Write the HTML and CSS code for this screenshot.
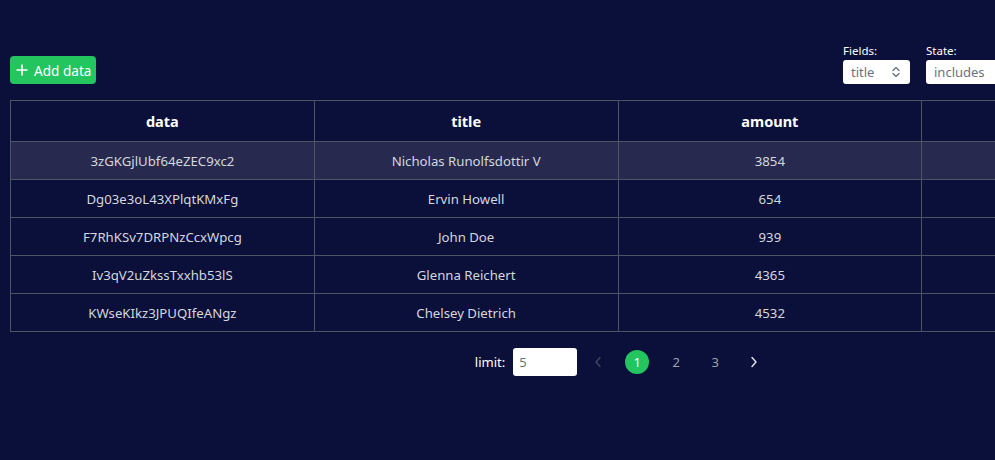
FILE: index.html
```
<!DOCTYPE html>
<html lang="en">
<head>
<meta charset="utf-8">
<title>Data table</title>
<link rel="stylesheet" href="styles.css">
</head>
<body>
<div class="page">
  <div class="toolbar">
    <button class="add-btn" type="button">
      <svg class="plus" viewBox="0 0 12 12" width="12" height="12"><path d="M6 0.5v11M0.5 6h11" stroke="#fff" stroke-width="1.6" fill="none"/></svg>
      <span>Add data</span>
    </button>
    <div class="filters">
      <div class="field">
        <span class="field-label">Fields:</span>
        <span class="select">
          <span class="select-value">title</span>
          <svg class="updown" viewBox="0 0 10 14" width="10" height="14"><path d="M2 5.5L5 2.5L8 5.5M2 8.5L5 11.5L8 8.5" stroke="#6b7280" stroke-width="1.4" fill="none" stroke-linecap="round" stroke-linejoin="round"/></svg>
        </span>
      </div>
      <div class="field">
        <span class="field-label">State:</span>
        <span class="text-input wide">includes</span>
      </div>
    </div>
  </div>

  <table class="grid">
    <thead>
      <tr><th>data</th><th>title</th><th>amount</th><th></th></tr>
    </thead>
    <tbody>
      <tr class="hover"><td>3zGKGjlUbf64eZEC9xc2</td><td>Nicholas Runolfsdottir V</td><td>3854</td><td></td></tr>
      <tr><td>Dg03e3oL43XPlqtKMxFg</td><td>Ervin Howell</td><td>654</td><td></td></tr>
      <tr><td>F7RhKSv7DRPNzCcxWpcg</td><td>John Doe</td><td>939</td><td></td></tr>
      <tr><td>Iv3qV2uZkssTxxhb53lS</td><td>Glenna Reichert</td><td>4365</td><td></td></tr>
      <tr><td>KWseKIkz3JPUQIfeANgz</td><td>Chelsey Dietrich</td><td>4532</td><td></td></tr>
    </tbody>
  </table>

  <div class="pager">
    <span class="limit-label">limit:</span>
    <span class="limit-input">5</span>
    <div class="pages">
      <span class="arrow disabled"><svg viewBox="0 0 8 12" width="8" height="12"><path d="M6 1.5L2 6l4 4.5" stroke="currentColor" stroke-width="1.4" fill="none" stroke-linecap="round" stroke-linejoin="round"/></svg></span>
      <span class="page-num active">1</span>
      <span class="page-num">2</span>
      <span class="page-num">3</span>
      <span class="arrow"><svg viewBox="0 0 8 12" width="8" height="12"><path d="M2 1.5L6 6l-4 4.5" stroke="currentColor" stroke-width="1.4" fill="none" stroke-linecap="round" stroke-linejoin="round"/></svg></span>
    </div>
  </div>
</div>
</body>
</html>
```
FILE: styles.css
```
html {
  background: #0b103a;
}
body {
  margin: 0;
  padding: 0;
  background: #0b103a;
  font-family: "Noto Sans", "Open Sans", sans-serif;
  color: #d4d7de;
  font-size: 13px;
}
.page {
  width: 1216px;
  padding: 42px 10px 0 10px;
}
.toolbar {
  display: flex;
  justify-content: space-between;
  align-items: flex-end;
  height: 42px;
}
.add-btn {
  display: flex;
  align-items: center;
  gap: 6px;
  height: 28px;
  padding: 0 5px 0 6px;
  background: #22c55e;
  border: none;
  border-radius: 4px;
  color: #fff;
  font-family: inherit;
  font-size: 13.6px;
}
.plus { display: block; }
.filters {
  display: flex;
  gap: 16px;
  align-items: flex-end;
}
.field {
  display: flex;
  flex-direction: column;
  gap: 1px;
}
.field-label {
  color: #fff;
  font-size: 11.5px;
  line-height: 16px;
}
.select {
  display: flex;
  align-items: center;
  justify-content: space-between;
  width: 67px;
  height: 24px;
  box-sizing: border-box;
  padding: 0 9px 0 8px;
  background: #fff;
  border-radius: 3px;
  color: #6b7280;
  font-size: 13px;
}
.updown { display: block; }
.text-input {
  display: flex;
  align-items: center;
  height: 24px;
  box-sizing: border-box;
  padding: 0 8px;
  background: #fff;
  border-radius: 3px;
  color: #6b7280;
  font-size: 13px;
}
.text-input.wide { width: 300px; }
.grid {
  margin-top: 16px;
  width: 1216px;
  border-collapse: collapse;
  table-layout: fixed;
}
.grid th, .grid td {
  border: 1px solid #4b5563;
  text-align: center;
  padding: 0;
}
.grid th {
  height: 40px;
  color: #fff;
  font-size: 14.5px;
  font-weight: 700;
}
.grid td {
  height: 37px;
  font-size: 13.2px;
}
.grid tr.hover td { background: #272a4e; }
.pager {
  display: flex;
  justify-content: center;
  align-items: center;
  margin-top: 16px;
  padding-left: 5px;
  height: 28px;
}
.limit-label {
  color: #fff;
  font-size: 13px;
  margin-right: 8px;
}
.limit-input {
  display: flex;
  align-items: center;
  width: 64px;
  height: 28px;
  box-sizing: border-box;
  padding: 0 6px;
  background: #fff;
  border-radius: 3px;
  color: #6b7280;
  font-size: 13px;
}
.pages {
  display: flex;
  align-items: center;
  gap: 15px;
  margin-left: 9px;
}
.arrow, .page-num {
  display: flex;
  align-items: center;
  justify-content: center;
  width: 24px;
  height: 24px;
  color: #9ca3af;
  font-size: 13px;
}
.arrow { color: #e5e7eb; }
.arrow.disabled { color: #3f4663; }
.page-num.active {
  background: #22c55e;
  color: #fff;
  border-radius: 50%;
}
```
